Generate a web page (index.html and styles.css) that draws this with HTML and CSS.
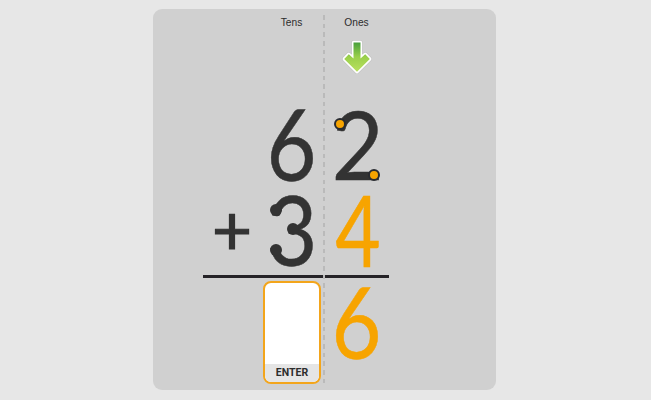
FILE: index.html
```
<!DOCTYPE html>
<html lang="en">
<head>
<meta charset="utf-8">
<title>Addition</title>
<link rel="stylesheet" href="styles.css">
</head>
<body>
<main class="board">
  <div class="divider"></div>
  <div class="sum">
    <div class="row labels"><span></span><span>Tens</span><span>Ones</span></div>
    <div class="row hint"><span></span><span></span>
      <svg class="arrow" width="32" height="38" viewBox="0 0 32 38">
        <defs><linearGradient id="g" x1="0" y1="0" x2="0" y2="1"><stop offset="0" stop-color="#48a03c"/><stop offset=".5" stop-color="#9bd04b"/><stop offset="1" stop-color="#b9e060"/></linearGradient></defs>
        <path d="M12.5 3.5h7v16l4.7-4.2 4.6 4.7L16 32.7 3.2 20l4.6-4.7 4.7 4.2z" fill="#fff" stroke="#b5b5b5" stroke-width="4.2" stroke-linejoin="round"/>
        <path d="M12.5 3.5h7v16l4.7-4.2 4.6 4.7L16 32.7 3.2 20l4.6-4.7 4.7 4.2z" fill="url(#g)" stroke="#fff" stroke-width="3.4" stroke-linejoin="round" paint-order="stroke"/>
      </svg>
    </div>
    <div class="row first">
      <span></span>
      <span class="digit six"><b class="glyph">6</b></span>
      <span class="digit two"><b class="glyph">2</b><i class="dot start"></i><i class="dot end"></i></span>
    </div>
    <div class="row second">
      <span class="digit plus"><b class="glyph">+</b></span>
      <span class="digit three"><b class="glyph">3</b><i class="knob top"></i><i class="knob mid"></i><i class="knob low"></i></span>
      <span class="digit four"><b class="glyph">4</b></span>
    </div>
    <div class="rule"><span></span><span></span></div>
    <div class="row answer">
      <span></span>
      <div class="entry"><div class="pad"></div><button class="enter">ENTER</button></div>
      <span class="digit six gold"><b class="glyph">6</b></span>
    </div>
  </div>
</main>
</body>
</html>
```

FILE: styles.css
```
* { box-sizing: border-box; }
body { margin: 0; height: 400px; padding-top: 9px; background: #e7e7e7; font-family: "Liberation Sans", sans-serif; overflow: hidden; }
.board { position: relative; width: 343px; height: 381px; margin-left: 153px; padding-left: 50px; background: #d0d0d0; border-radius: 9px; }
.divider { position: absolute; left: 170px; top: 6px; width: 2px; height: 368px; background: repeating-linear-gradient(to bottom, #bababa 0 4.6px, transparent 4.6px 8.66px); }
.sum { width: 186px; }
.row { display: grid; grid-template-columns: 56px 65px 65px; }
.labels { height: 28px; padding-top: 6px; font: 10.2px/15px "Liberation Sans", sans-serif; color: #2c2c2c; text-align: center; }
.hint { height: 72px; }
.arrow { margin: 2px auto 0 17px; }
.digit { position: relative; display: flex; align-items: flex-start; justify-content: center; height: 72px; color: #333; }
.glyph { display: block; font: 400 98px/68px Lato, sans-serif; -webkit-text-stroke: .5px currentColor; }
.six .glyph { transform: scaleX(.88); }
.two .glyph { font-size: 95px; transform: translateX(1px) scaleX(.94); }
.three .glyph { font-size: 97px; transform: translateX(1px) scaleX(.9); }
.four .glyph { transform: translateX(1.5px) scaleX(.8); }
.plus .glyph { font-size: 69px; line-height: 67px; transform: translateX(1px); -webkit-text-stroke-width: 1.2px; }
.first { height: 86px; }
.second { height: 80px; }
.four, .gold { color: #f7a400; }
.dot, .knob { position: absolute; border-radius: 50%; width: 12px; height: 12px; background: #333; }
.dot { background: #f7a400; border: 2px solid #292b30; }
.start { left: 10px; top: 9px; }
.end { left: 44px; top: 60px; }
.top { left: 11px; top: 9px; }
.mid { left: 28px; top: 28px; }
.low { left: 11px; top: 49px; }
.rule { display: grid; grid-template-columns: 120.5px 64.5px; gap: 1px; height: 3px; }
.rule span { background: #252327; }
.answer { padding-top: 3px; }
.entry { width: 58px; height: 103px; margin-left: 4px; display: flex; flex-direction: column; border: 2px solid #f3a51b; border-radius: 8px; background: #fff; overflow: hidden; }
.pad { flex: 1; }
.enter { height: 18px; padding: 0; border: 0; background: #e5e5e5; color: #2d2d2d; font: 700 10.5px/18px Roboto, sans-serif; }
.gold { margin-top: 6px; }
```
